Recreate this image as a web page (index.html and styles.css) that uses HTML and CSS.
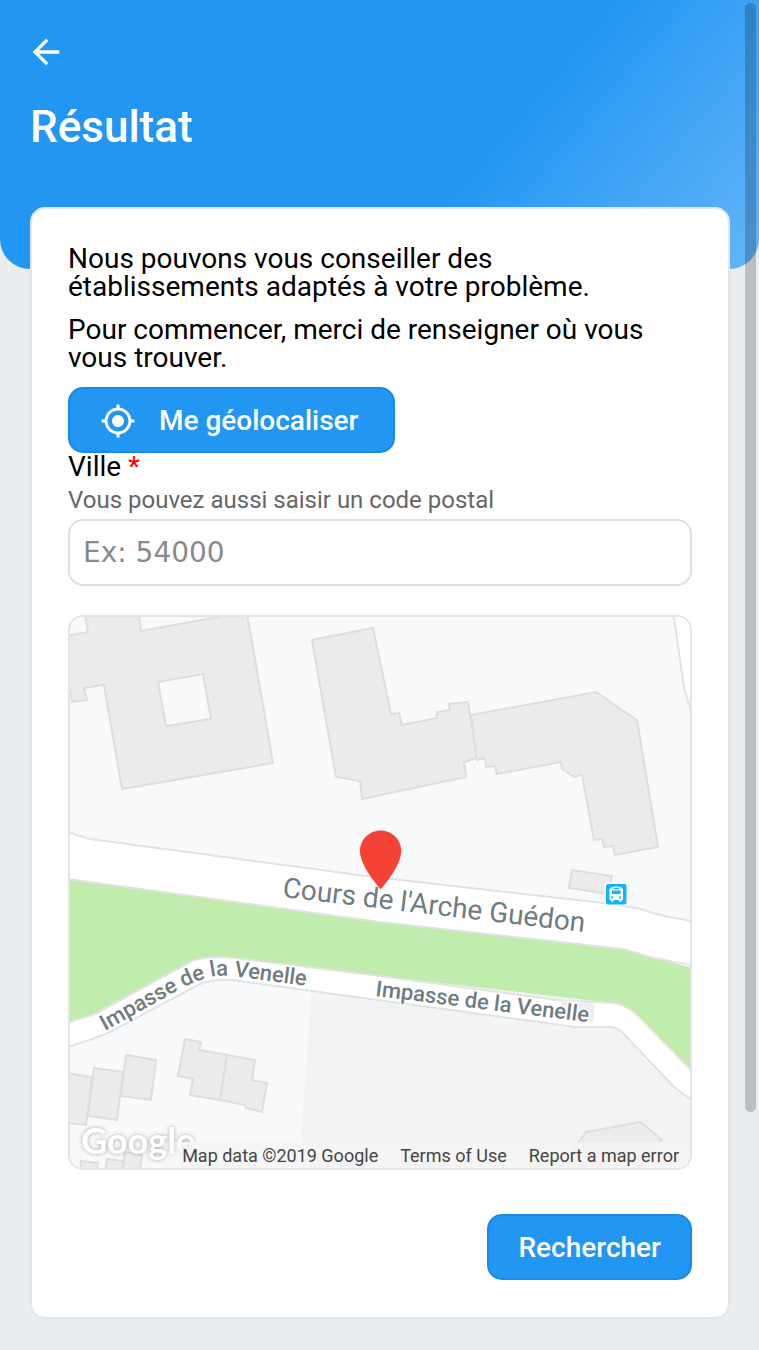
FILE: index.html
```html
<!DOCTYPE html>
<html lang="fr">
<head>
  <meta charset="utf-8">
  <meta name="viewport" content="width=device-width, initial-scale=1">
  <title>Résultat</title>
  <link rel="stylesheet" href="styles.css">
</head>
<body>
  <div class="page">
    <header class="hero">
      <button class="back" type="button" aria-label="Retour">
        <svg class="back-icon" viewBox="0 0 24 24" aria-hidden="true"><path d="M20 11H7.83l5.59-5.59L12 4l-8 8 8 8 1.41-1.41L7.83 13H20v-2z"/></svg>
      </button>
      <h1 class="title">Résultat</h1>
    </header>

    <main class="card">
      <p class="text">Nous pouvons vous conseiller des<br>établissements adaptés à votre problème.</p>
      <p class="text">Pour commencer, merci de renseigner où vous<br>vous trouver.</p>
      <form class="form">
        <button class="btn btn-locate" type="button">
          <svg class="btn-icon" viewBox="0 0 24 24" aria-hidden="true"><path d="M12 8c-2.21 0-4 1.79-4 4s1.790 4 4 4 4-1.790 4-4-1.790-4-4-4zm8.940 3A8.994 8.994 0 0 0 13 3.060V1h-2v2.060A8.994 8.994 0 0 0 3.060 11H1v2h2.060A8.994 8.994 0 0 0 11 20.940V23h2v-2.060A8.994 8.994 0 0 0 20.940 13H23v-2h-2.060zM12 19c-3.870 0-7-3.130-7-7s3.130-7 7-7 7 3.130 7 7-3.130 7-7 7z"/></svg>
          <span>Me géolocaliser</span>
        </button>
        <label class="label" for="ville">Ville <span class="required">*</span></label>
        <span class="hint" id="ville-hint">Vous pouvez aussi saisir un code postal</span>
        <input class="field" id="ville" type="text" placeholder="Ex: 54000" aria-describedby="ville-hint" required>

        <div class="map">
          <svg class="map-canvas" viewBox="70 617 620 551" role="img" aria-label="Carte du Cours de l'Arche Guédon">
            <defs>
              <path id="road-main" d="M282 897L600 934"/>
              <path id="road-left" d="M105 1031L171 994Q200 978 216 976Q226 975 240 977L330 989"/>
              <path id="road-right" d="M375 996L620 1026"/>
            </defs>
            <rect class="ground" x="60" y="610" width="640" height="570"/>
            <path class="block" d="M312 985L298 1180H700V985Z"/>
            <path class="road" d="M673 610L684 688L692 714H700V610Z"/>
            <path class="park" d="M60 878L380 922L624 949L650 957L700 970V1080L632 1011L613 1003L380 976L225 957L199 959L95 1014L60 1026Z"/>
            <path class="road" d="M60 830L90 839L366 876L612 904L637 908L660 915L700 923V967L650 957L624 949L380 922L69 879L60 878Z"/>
            <path class="road" d="M60 1025L95 1014L190 962Q199 957 225 957L380 976L557 1000L613 1003Q626 1005 635 1013L700 1079V1106L674 1087L624 1034Q619 1028 610 1027H575L312 991L232 980Q212 979 200 984L106 1034L60 1050Z"/>
            <path class="patch" d="M563 999L595 1004L593 1022L560 1017Z"/>
            <g class="building">
              <path fill-rule="evenodd" d="M60 637L88 632L84 610H138L141 631L240 613H247L273 763L122 789L104 685L84 688L87 700L72 702L70 690L60 660ZM158 682L203 674L211 719L166 726Z"/>
              <path d="M312 640L373 628L391 714L399 713L402 725L437 718L437 712L450 710L449 704L468 702L477 758L464 762L466 777L362 799L360 781L336 777Z"/>
              <path d="M471 715L596 692L637 720L658 847L615 855L613 846L604 847L602 839L594 840L582 775L574 777L562 769L561 762L497 774L495 766L486 767L485 758L477 760Z"/>
              <path d="M572 870L612 876L609 894L569 888Z"/>
              <path d="M60 1072L92 1077L86 1125L60 1122ZM94 1068L123 1072L117 1120L88 1116ZM126 1055L156 1060L151 1100L121 1096Z"/>
              <path d="M185 1039L201 1042L199 1050L227 1055L255 1060L252 1080L267 1083L262 1112L246 1108L245 1105L220 1100L190 1095L193 1079L178 1076ZM227 1055L220 1100"/>
              <path d="M81 1161L98 1163L97 1172H80ZM107 1159L124 1161L122 1172H105ZM125 1152L142 1155L140 1172H122Z"/>
              <path d="M586 1132L641 1122L662 1140L652 1152L558 1172Z"/>
            </g>
            <text class="street street-main"><textPath href="#road-main">Cours de l'Arche Guédon</textPath></text>
            <text class="street street-side"><textPath href="#road-left">Impasse de la Venelle</textPath></text>
            <text class="street street-side"><textPath href="#road-right">Impasse de la Venelle</textPath></text>
            <rect x="604.500" y="882.500" width="23" height="23" rx="3" fill="#fff"/>
            <rect x="606" y="884" width="20.500" height="20.500" rx="2" fill="#12b5fb"/>
            <path fill="#fff" fill-rule="evenodd" d="M609.500 890Q609.500 886.500 616.300 886.500T623 890V900H621.500V901.500H619V900H613.500V901.500H611V900H609.500ZM612 890.500H620.500V894H612ZM613.500 888H619V889.200H613.500ZM611.200 896.500H613.200V898.500H611.200ZM619.300 896.500H621.300V898.500H619.300Z"/>
            <path class="pin" transform="translate(345.200 824.500) scale(2.950)" d="M12 2C8.130 2 5 5.130 5 9c0 5.250 7 13 7 13s7-7.750 7-13c0-3.870-3.130-7-7-7z"/>
            <text class="brand" x="81" y="1154">Google</text>
          </svg>
          <div class="credits">
            <span>Map data ©2019 Google</span>
            <a href="#terms">Terms of Use</a>
            <a href="#report">Report a map error</a>
          </div>
        </div>

        <button class="btn btn-submit" type="submit">Rechercher</button>
      </form>
    </main>
    <div class="scroll-thumb" aria-hidden="true"></div>
  </div>
</body>
</html>
```
FILE: styles.css
```css
* {
  box-sizing: border-box;
}

body {
  margin: 0;
  background: #ebeef1;
  color: #000;
  font-family: Roboto, "Liberation Sans", sans-serif;
  font-size: 28px;
  line-height: 28px;
}

.page {
  position: relative;
  padding-bottom: 30px;
}

.hero {
  min-height: 269px;
  padding: 32px 26px;
  border-radius: 0 0 30px 30px;
  background: linear-gradient(130deg, #2196f3 62%, #42a5f5 80%, #64b5f6 100%);
  color: #fff;
}

.back {
  display: block;
  width: 40px;
  height: 40px;
  padding: 0;
  border: 0;
  background: none;
}

.back-icon {
  display: block;
  fill: #fff;
}

.title {
  margin: 28px 0 0 4px;
  font-size: 44px;
  font-weight: 500;
  line-height: 54px;
}

.card {
  margin: -62px 29px 0 30px;
  padding: 36px 36px 37px;
  border: 2px solid #e4e5e6;
  border-radius: 15px;
  background: #fff;
}

.text {
  margin: 0 0 15px;
}

.form {
  display: flex;
  flex-direction: column;
}

.btn {
  display: flex;
  align-items: center;
  gap: 23px;
  height: 66px;
  padding: 2px 29px 0;
  border: 2px solid #1e88e5;
  border-radius: 15px;
  background: #2196f3;
  color: #fff;
  font: 500 28px/32px Roboto, "Liberation Sans", sans-serif;
}

.btn-locate {
  align-self: flex-start;
  padding: 2px 34px 0 30px;
}

.btn-icon {
  width: 36px;
  height: 36px;
  fill: #fff;
}

.btn-submit {
  align-self: flex-end;
  margin-top: 44px;
}

.required {
  color: #f00;
}

.hint {
  color: #666;
  font-size: 24px;
  line-height: 38px;
}

.field {
  width: 100%;
  height: 67px;
  padding: 0 13px;
  border: 2px solid #e0e0e0;
  border-radius: 15px;
  background: #fff;
  color: #000;
  font: 28px/32px "DejaVu Sans", sans-serif;
}

.field::placeholder {
  color: #8a8a8a;
  opacity: 1;
}

.map {
  position: relative;
  margin-top: 29px;
  overflow: hidden;
  border: 2px solid #e4e4e4;
  border-radius: 15px;
}

.map-canvas {
  display: block;
  width: 100%;
}

.ground {
  fill: #f8f9fb;
}

.block {
  fill: #f1f3f4;
}

.park {
  fill: #c0ecae;
}

.road {
  fill: #fff;
  stroke: #e3e3e3;
  stroke-width: 2;
}

.patch {
  fill: #efefef;
}

.building {
  fill: #ececec;
  stroke: #dedede;
  stroke-width: 2;
}

.street {
  fill: #6f7c80;
  stroke: #fff;
  stroke-width: 3;
  stroke-linejoin: round;
  paint-order: stroke;
}

.street-main {
  font-size: 28px;
}

.street-side {
  font-size: 22px;
  font-weight: 500;
}

.pin {
  fill: #f44336;
}

.brand {
  fill: #fff;
  font-family: Lato, sans-serif;
  font-size: 36px;
  font-weight: 700;
  filter: drop-shadow(0 0 2px #aaa);
}

.credits {
  position: absolute;
  right: 0;
  bottom: 0;
  display: flex;
  gap: 22px;
  padding: 2px 11px 0 20px;
  background: linear-gradient(90deg, rgba(245, 245, 245, 0), rgba(245, 245, 245, 0.8) 20px);
  color: #444;
  font-size: 18px;
  line-height: 24px;
  white-space: nowrap;
}

.credits a {
  color: inherit;
  text-decoration: none;
}

.scroll-thumb {
  position: absolute;
  top: 3px;
  right: 3px;
  width: 11px;
  height: 82.2%;
  border-radius: 6px;
  background: rgba(0, 0, 0, 0.2);
}
```
